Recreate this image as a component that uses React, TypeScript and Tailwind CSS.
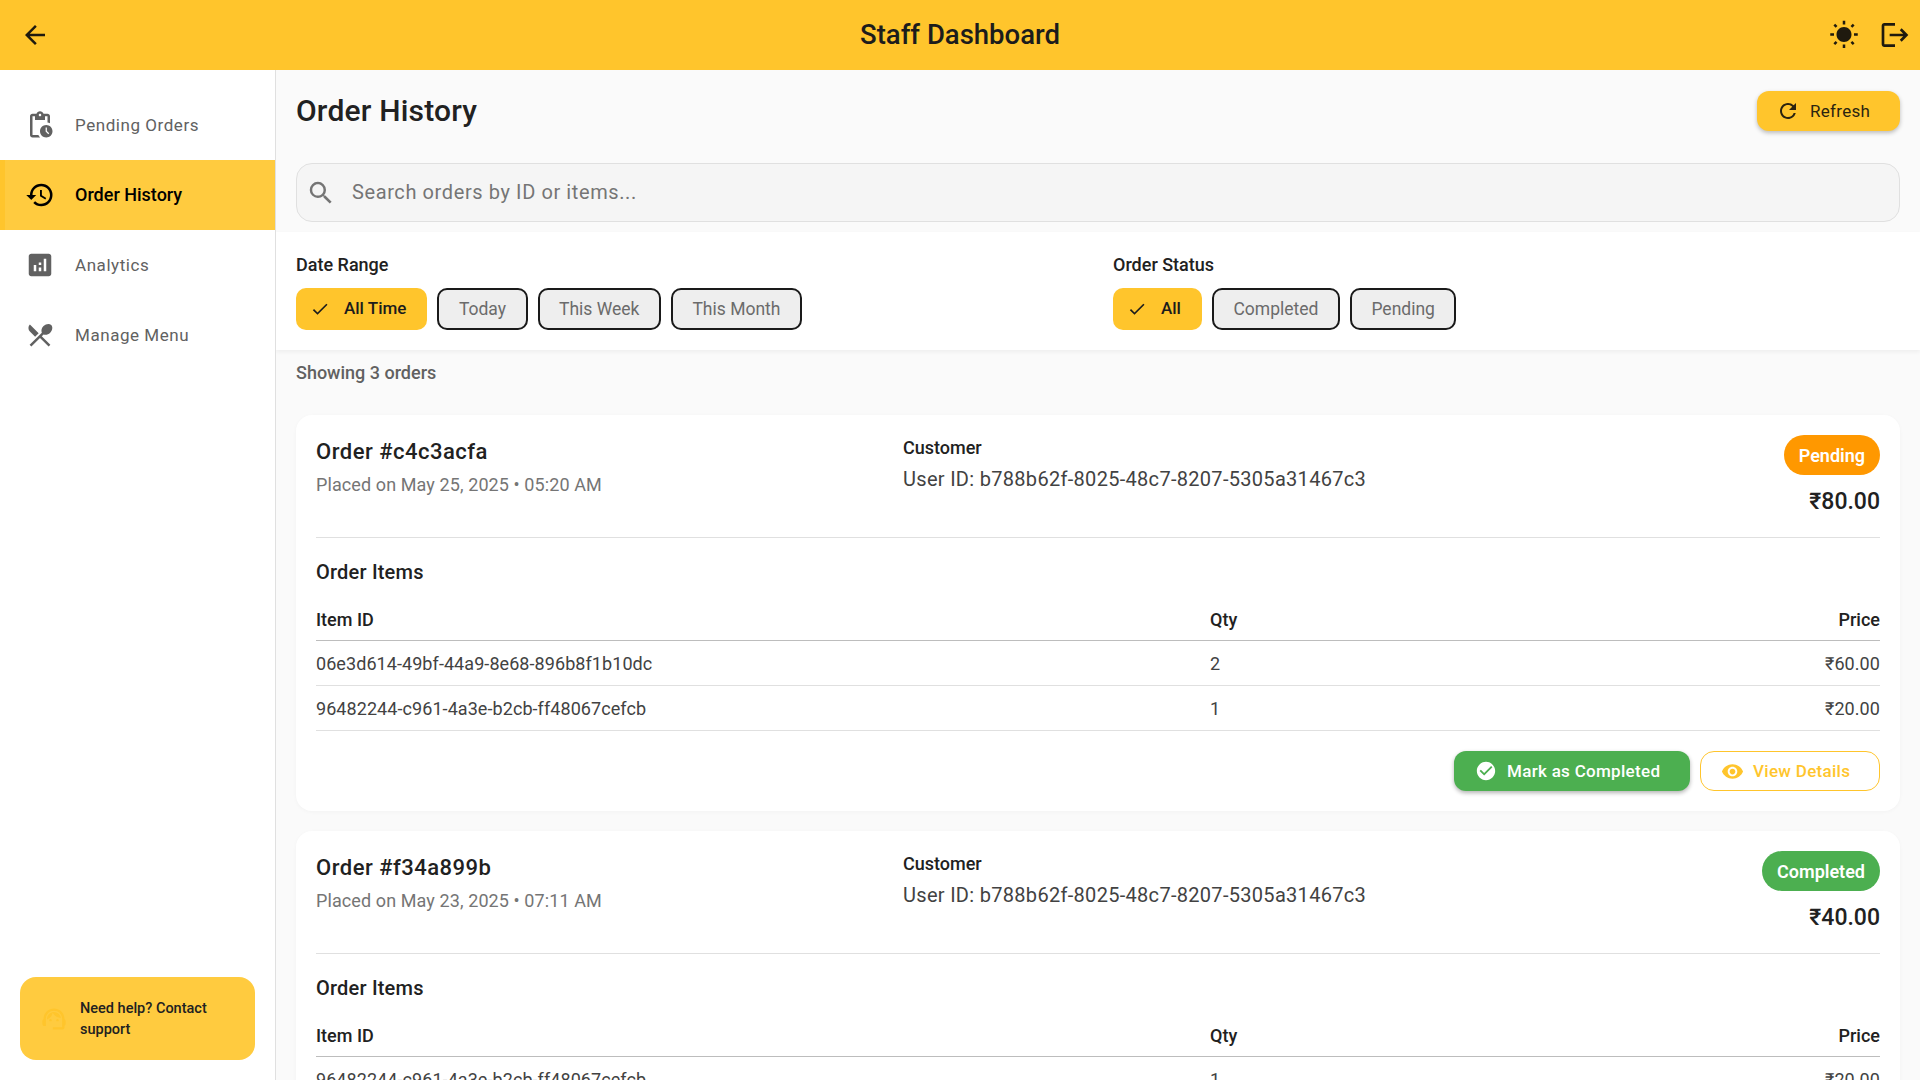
import {
  MdAnalytics,
  MdArrowBack,
  MdCheck,
  MdCheckCircle,
  MdHistory,
  MdLogout,
  MdPendingActions,
  MdRefresh,
  MdRestaurantMenu,
  MdSearch,
  MdSupportAgent,
  MdVisibility,
  MdWbSunny,
} from 'react-icons/md'

const navItems = [
  { label: 'Pending Orders', icon: MdPendingActions },
  { label: 'Order History', icon: MdHistory, active: true },
  { label: 'Analytics', icon: MdAnalytics },
  { label: 'Manage Menu', icon: MdRestaurantMenu },
]

const orders = [
  {
    id: 'c4c3acfa',
    placed: 'May 25, 2025 • 05:20 AM',
    status: 'Pending',
    total: '₹80.00',
    items: [
      { id: '06e3d614-49bf-44a9-8e68-896b8f1b10dc', qty: 2, price: '₹60.00' },
      { id: '96482244-c961-4a3e-b2cb-ff48067cefcb', qty: 1, price: '₹20.00' },
    ],
  },
  {
    id: 'f34a899b',
    placed: 'May 23, 2025 • 07:11 AM',
    status: 'Completed',
    total: '₹40.00',
    items: [{ id: '96482244-c961-4a3e-b2cb-ff48067cefcb', qty: 1, price: '₹20.00' }],
  },
]

function Chip({ label, selected }: { label: string; selected?: boolean }) {
  if (selected) {
    return (
      <div className="flex h-[42px] items-center rounded-[10px] bg-[#ffc52c] pl-[14px] pr-[21px] text-[17px] font-medium text-[#1c1c1c]">
        <MdCheck className="mr-[14px] text-[20px]" />
        {label}
      </div>
    )
  }
  return (
    <div className="flex h-[42px] items-center rounded-[10px] border-2 border-[#1a1a1a] bg-[#eeeeee] px-[19.5px] text-[17.5px] text-[#6b6b6b]">
      {label}
    </div>
  )
}

function OrderCard({ order }: { order: (typeof orders)[number] }) {
  return (
    <div className="mb-5 rounded-[16px] bg-white p-5 shadow-[0_1px_4px_rgba(0,0,0,0.03)]">
      <div className="flex h-[103px] border-b border-[#e0e0e0]">
        <div className="w-[587px]">
          <div className="mt-[2px] text-[22px] font-medium leading-[30px] tracking-[0.5px] text-[#212121]">
            Order #{order.id}
          </div>
          <div className="mt-[6px] text-[18px] leading-[24px] tracking-[0.1px] text-[#757575]">
            Placed on {order.placed}
          </div>
        </div>
        <div className="flex-1">
          <div className="mt-[1px] text-[18px] font-medium leading-[24px] text-[#212121]">Customer</div>
          <div className="mt-[5px] text-[20px] leading-[28px] tracking-[0.3px] text-[#424242]">
            User ID: b788b62f-8025-48c7-8207-5305a31467c3
          </div>
        </div>
        <div className="flex flex-col items-end">
          <div
            className={`flex h-10 items-center rounded-full px-[15px] text-[18px] font-semibold text-white ${
              order.status === 'Pending' ? 'bg-[#ff9800]' : 'bg-[#4caf50]'
            }`}
          >
            {order.status}
          </div>
          <div className="mt-[13px] text-[23px] font-medium leading-[28px] text-[#212121]">{order.total}</div>
        </div>
      </div>

      <div className="mt-[20px] text-[20px] font-medium leading-[28px] tracking-[0.2px] text-[#212121]">
        Order Items
      </div>

      <div className="mt-[13px]">
        <div className="grid h-[42px] grid-cols-[894px_1fr_auto] items-center border-b border-[#bdbdbd] pb-[1px] text-[18px] font-medium text-[#212121]">
          <div>Item ID</div>
          <div>Qty</div>
          <div>Price</div>
        </div>
        {order.items.map((item) => (
          <div
            key={item.id}
            className="grid h-[45px] grid-cols-[894px_1fr_auto] items-center border-b border-[#e0e0e0] text-[18px] tracking-[0.07px] text-[#424242]"
          >
            <div>{item.id}</div>
            <div>{item.qty}</div>
            <div>{item.price}</div>
          </div>
        ))}
      </div>

      <div className="mt-5 flex justify-end gap-[10px]">
        <div className="flex h-10 w-[236px] items-center rounded-[12px] bg-[#4caf50] pl-[21px] text-[17px] font-medium tracking-[0.3px] text-white shadow-[0_2px_4px_rgba(0,0,0,0.3)]">
          <MdCheckCircle className="mr-[10px] text-[22px]" />
          <span className="pt-[2px]">Mark as Completed</span>
        </div>
        <div className="flex h-10 w-[180px] items-center rounded-[14px] border border-[#ffc52c] pl-[20px] text-[17px] font-medium tracking-[0.3px] text-[#ffc52c]">
          <MdVisibility className="mr-[9px] text-[23px]" />
          <span className="pt-[2px]">View Details</span>
        </div>
      </div>
    </div>
  )
}

export default function App() {
  return (
    <div className="flex h-screen flex-col overflow-hidden bg-white font-['Roboto',sans-serif]">
      {/* Header */}
      <header className="grid h-[70px] shrink-0 grid-cols-[1fr_auto_1fr] items-center bg-[#ffc52c] px-[9px] text-[#1f1a0e]">
        <MdArrowBack className="ml-[11px] text-[30px]" />
        <h1 className="text-[27.5px] font-medium text-[#1c1c1c]">Staff Dashboard</h1>
        <div className="flex items-center justify-end gap-[20px]">
          <MdWbSunny className="text-[30px]" />
          <MdLogout className="text-[32px]" />
        </div>
      </header>

      <div className="flex min-h-0 flex-1">
        {/* Sidebar */}
        <aside className="flex w-[276px] shrink-0 flex-col justify-between border-r border-[#e0e0e0] bg-white pb-5 pt-5">
          <nav>
            {navItems.map(({ label, icon: Icon, active }) => (
              <div
                key={label}
                className={
                  active
                    ? 'flex h-[70px] items-center border-l-[5px] border-[#ffc52c] bg-[#ffcb3f] pl-[20px] text-[18px] font-medium text-black'
                    : 'flex h-[70px] items-center pl-[25px] text-[17px] tracking-[0.55px] text-[#616161]'
                }
              >
                <Icon className="mr-[20px] text-[30px]" />
                <span className={active ? 'pb-[2px]' : 'pt-[1px]'}>{label}</span>
              </div>
            ))}
          </nav>
          <div className="mx-5 flex h-[83px] items-center rounded-[16px] bg-[#ffcb3f] px-[20px]">
            <MdSupportAgent className="mr-[12px] shrink-0 text-[28px] text-[#ffc52c]" />
            <div className="pt-[1px] text-[14.5px] font-medium leading-[21px] text-[#212121]">
              Need help? Contact support
            </div>
          </div>
        </aside>

        {/* Main */}
        <main className="min-w-0 flex-1 overflow-hidden bg-[#fafafa]">
          <div className="px-5 pt-[21px]">
            <div className="flex h-10 items-center justify-between">
              <h2 className="pb-[2px] text-[30px] font-medium tracking-[0.2px] text-[#212121]">Order History</h2>
              <div className="flex h-10 w-[143px] items-center rounded-[12px] bg-[#ffc52c] pl-[19px] text-[17px] tracking-[0.3px] text-[#2b2410] shadow-[0_2px_4px_rgba(0,0,0,0.25)]">
                <MdRefresh className="mr-[10px] text-[24px]" />
                <span className="pt-[2px]">Refresh</span>
              </div>
            </div>
            <div className="mt-[32px] flex h-[59px] items-center rounded-[16px] border-[1.5px] border-[#e0e0e0] bg-[#f5f5f5] pl-[9px] text-[20px] tracking-[0.6px] text-[#757575]">
              <MdSearch className="mr-[16px] text-[30px]" />
              <span className="pb-[2px]">Search orders by ID or items...</span>
            </div>
          </div>

          <div className="mt-[10px] grid h-[118px] grid-cols-[817px_1fr] bg-white px-5 pt-[21px] shadow-[0_2px_4px_rgba(0,0,0,0.05)]">
            <div>
              <div className="mb-[11px] text-[18px] font-medium leading-[24px] text-[#212121]">Date Range</div>
              <div className="flex gap-[10px]">
                <Chip label="All Time" selected />
                <Chip label="Today" />
                <Chip label="This Week" />
                <Chip label="This Month" />
              </div>
            </div>
            <div>
              <div className="mb-[11px] text-[18px] font-medium leading-[24px] text-[#212121]">Order Status</div>
              <div className="flex gap-[10px]">
                <Chip label="All" selected />
                <Chip label="Completed" />
                <Chip label="Pending" />
              </div>
            </div>
          </div>

          <div className="px-5">
            <div className="mb-[30px] mt-[11px] text-[18px] font-medium leading-[24px] text-[#616161]">
              Showing 3 orders
            </div>
            {orders.map((order) => (
              <OrderCard key={order.id} order={order} />
            ))}
          </div>
        </main>
      </div>
    </div>
  )
}
